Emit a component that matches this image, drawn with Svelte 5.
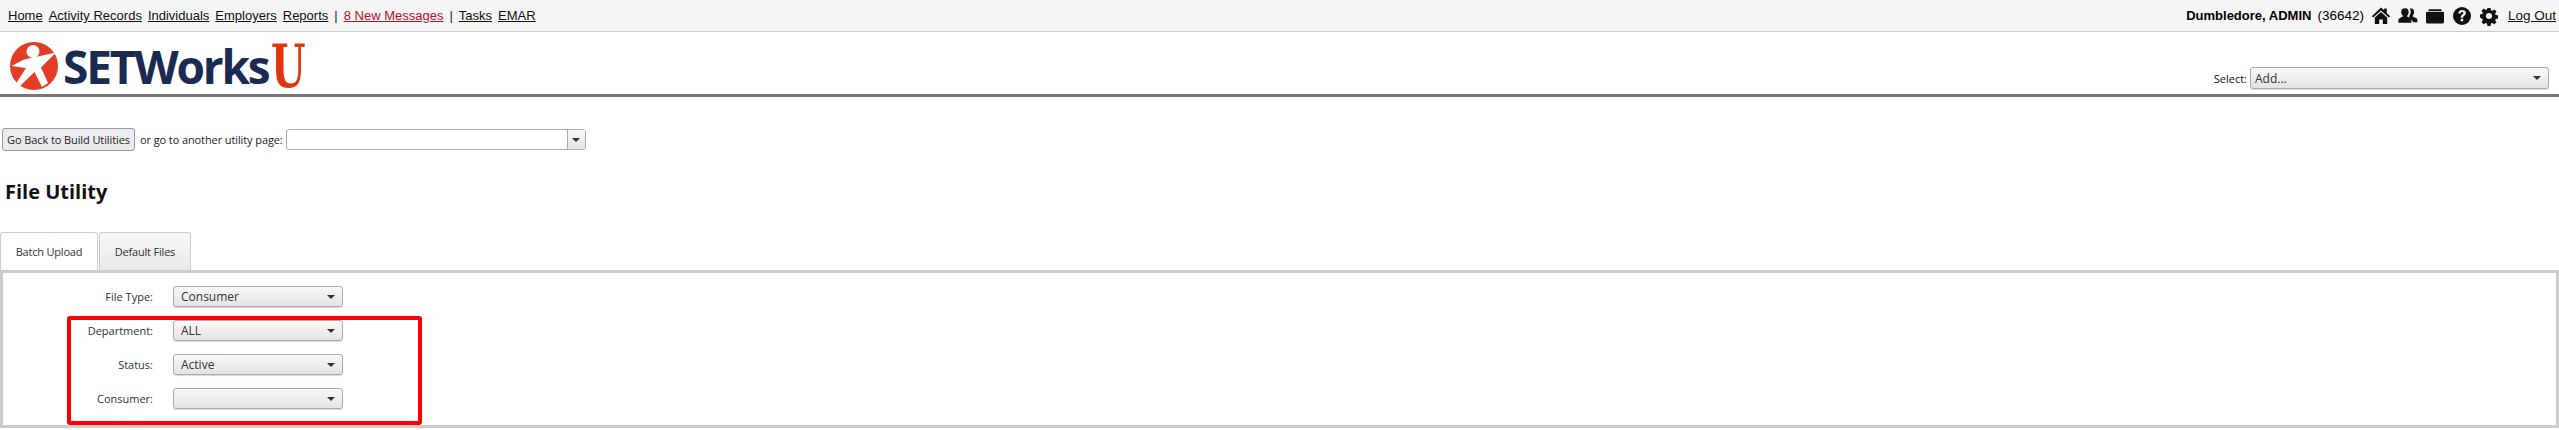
<script>
	const navLeft = ['Home', 'Activity Records', 'Individuals', 'Employers', 'Reports'];
	const navRight = ['Tasks', 'EMAR'];
	const rows = [
		{ label: 'File Type:', value: 'Consumer' },
		{ label: 'Department:', value: 'ALL' },
		{ label: 'Status:', value: 'Active' },
		{ label: 'Consumer:', value: '' }
	];
</script>

<div class="topbar">
	<nav>
		{#each navLeft as item}
			<a href="#top">{item}</a>
		{/each}
		<span class="sep">|</span>
		<a href="#top" class="msg">8 New Messages</a>
		<span class="sep">|</span>
		{#each navRight as item}
			<a href="#top">{item}</a>
		{/each}
	</nav>
	<div class="user">
		<b>Dumbledore, ADMIN</b>
		<span class="id">(36642)</span>
		<!-- home -->
		<svg class="ico" width="20" height="20" viewBox="0 0 20 20">
			<path d="M10 1.500 0.800 10.200l1.400 1.400L10 4.400l7.800 7.200 1.400-1.400-3.400-3.200V2.600h-2.600v1.600z" />
			<path d="M10 6 3.800 11.600V18h4.400v-4.600h3.600V18h4.400v-6.400z" />
		</svg>
		<!-- users -->
		<svg class="ico" width="20" height="20" viewBox="0 0 20 20">
			<path d="M7.400 2.200c2.200 0 3.300 1.700 3.300 3.700 0 1.500-.6 2.800-1.500 3.600v1.300c1.800.6 3.900 1.500 4.300 3v3H.4v-3c.4-1.500 2.500-2.400 4.300-3V9.500C3.800 8.700 3.200 7.400 3.200 5.900c0-2 1.100-3.700 4.200-3.700z" />
			<path d="M12.800 2.600c2.400 0 3.300 1.500 3.300 3.400 0 1.400-.5 2.600-1.400 3.400v1.300c1.800.5 4.300 1.300 4.700 2.800v2.700h-4.300c-.2-1.800-2.200-3.200-3.800-3.900V9.700c.9-1 1.400-2.400 1.400-3.900 0-1.200-.3-2.300-.9-3.100.2 0 .4-.1 1-.1z" />
		</svg>
		<!-- folder -->
		<svg class="ico" width="20" height="20" viewBox="0 0 20 20">
			<path d="M4 3.200h12l1 2H3z" />
			<path d="M1 6h18v10c0 .9-.6 1.400-1.400 1.400H2.400C1.600 17.400 1 16.900 1 16z" />
		</svg>
		<!-- help -->
		<svg class="ico" width="20" height="20" viewBox="0 0 20 20">
			<circle cx="10" cy="10" r="9" />
			<path fill="#f5f5f5" d="M6.300 7.400C6.500 5.200 8 4 10.200 4c2.200 0 3.700 1.200 3.700 3 0 1.400-.8 2.100-1.700 2.800-.8.6-1.100 1-1.100 1.900H8.700c0-1.600.4-2.300 1.400-3 .7-.5 1.200-.9 1.200-1.600 0-.7-.5-1.100-1.200-1.100-.8 0-1.300.5-1.400 1.400z" />
			<rect fill="#f5f5f5" x="8.700" y="12.800" width="2.500" height="2.500" />
		</svg>
		<!-- gear -->
		<svg class="ico" width="20" height="20" viewBox="0 0 20 20">
			<path fill-rule="evenodd" d="M8.300 1h3.400l.5 2.600 1.500.6 2.200-1.500 2.400 2.400-1.500 2.200.6 1.500 2.600.5v3.400l-2.600.5-.6 1.500 1.500 2.200-2.400 2.400-2.200-1.500-1.500.6-.5 2.600H8.300l-.5-2.600-1.500-.6-2.200 1.500-2.400-2.400 1.500-2.200-.6-1.500L0 11.700V8.300l2.600-.5.600-1.500-1.500-2.200 2.400-2.400 2.200 1.500 1.500-.6zM10 6.600a3.400 3.400 0 1 0 0 6.800 3.400 3.400 0 0 0 0-6.800z" transform="translate(1 1) scale(.9)" />
		</svg>
		<a href="#top" class="logout">Log Out</a>
	</div>
</div>

<header>
	<div class="logo">
		<svg class="mark" width="48" height="48" viewBox="0 0 48 48">
			<circle cx="24" cy="24" r="24" fill="#e03c26" />
			<ellipse cx="23" cy="9.500" rx="6.500" ry="6.500" fill="#fff" />
			<path fill="#fff" d="M1.500 24 14 17.500 46 10.500 31 25.500 38 41 32 45 24.500 30 10 44 6 41.500 16 26z" />
		</svg>
		<span class="word">SETWorks</span>
		<span class="u">U</span>
	</div>
	<div class="add">
		<label for="add">Select:</label>
		<div class="select wide" id="add"><span>Add...</span><i></i></div>
	</div>
</header>

<main>
	<div class="tools">
		<button>Go Back to Build Utilities</button>
		<span>or go to another utility page:</span>
		<div class="combo"><div class="drop"><i></i></div></div>
	</div>

	<h1>File Utility</h1>

	<div class="tabs">
		<div class="tab active">Batch Upload</div>
		<div class="tab">Default Files</div>
	</div>

	<div class="panel">
		{#each rows as row}
			<div class="row">
				<span class="lbl">{row.label}</span>
				<div class="select"><span>{row.value}</span><i></i></div>
			</div>
		{/each}
		<div class="highlight"></div>
	</div>
</main>

<style>
	:global(body) {
		margin: 0;
		height: 430px;
		overflow: hidden;
		background: #fff;
		font-family: "Open Sans", "Noto Sans", sans-serif;
		font-size: 11px;
		color: #222;
	}

	.topbar {
		height: 32px;
		box-sizing: border-box;
		padding: 0 3px 0 8px;
		display: flex;
		justify-content: space-between;
		align-items: center;
		background: #f5f5f5;
		border-bottom: 1px solid #ccc;
		font-family: "Liberation Sans", Arial, sans-serif;
		font-size: 13px;
		color: #000;
	}

	nav {
		display: flex;
		gap: 6px;
		align-items: center;
	}

	a {
		color: #111;
		text-decoration: underline;
	}

	.msg {
		color: #b1122c;
	}

	.sep {
		color: #222;
	}

	.user {
		display: flex;
		align-items: center;
		gap: 6px;
	}

	.user b {
		font-size: 13px;
	}

	.id {
		font-size: 13.500px;
	}

	.ico {
		fill: #111;
		display: block;
		margin-left: 1px;
	}

	.logout {
		margin-left: 3px;
		font-size: 13.500px;
	}

	header {
		height: 65px;
		box-sizing: border-box;
		display: flex;
		justify-content: space-between;
		align-items: flex-end;
		border-bottom: 3px solid #777;
		padding: 0 10px 5px 10px;
	}

	.logo {
		display: flex;
		align-items: center;
		height: 48px;
		margin-bottom: -1px;
	}

	.mark {
		display: block;
	}

	.word {
		margin-left: 5px;
		font-size: 46px;
		font-weight: 700;
		letter-spacing: -2.200px;
		color: #1a2a50;
		line-height: 48px;
	}

	.u {
		font-family: "DejaVu Serif", serif;
		font-weight: 700;
		font-size: 60px;
		line-height: 48px;
		color: #e0350f;
		display: inline-block;
		width: 35px;
		margin-left: 3px;
		transform: scaleX(.66);
		transform-origin: left center;
	}

	.add {
		display: flex;
		align-items: center;
		gap: 3px;
		color: #111;
	}

	.select {
		width: 170px;
		height: 21px;
		box-sizing: border-box;
		border: 1px solid #aaa;
		border-radius: 3px;
		background: linear-gradient(#f8f8f8, #e4e4e4);
		box-shadow: 0 1px 1px rgba(0, 0, 0, .15);
		display: flex;
		align-items: center;
		justify-content: space-between;
		padding: 0 7px;
		font-size: 12px;
		color: #333;
	}

	.select.wide {
		width: 299px;
		height: 22px;
		padding: 0 7px 0 4px;
	}

	i {
		width: 0;
		height: 0;
		border: 4px solid transparent;
		border-top: 4px solid #333;
		border-bottom: 0;
	}

	main {
		padding-top: 31px;
	}

	.tools {
		display: flex;
		align-items: center;
		padding-left: 2px;
		height: 23px;
		color: #222;
	}

	.tools span {
		margin: 0 3px 0 5px;
		letter-spacing: -.1px;
	}

	button {
		width: 133px;
		height: 23px;
		padding: 0;
		font: inherit;
		letter-spacing: -.1px;
		color: #222;
		border: 1px solid #999;
		border-radius: 3px;
		background: #ececf0;
		white-space: nowrap;
	}

	.combo {
		width: 300px;
		height: 21px;
		box-sizing: border-box;
		border: 1px solid #aaa;
		border-radius: 3px;
		display: flex;
		justify-content: flex-end;
		background: #fff;
	}

	.drop {
		width: 17px;
		border-left: 1px solid #aaa;
		background: linear-gradient(#f8f8f8, #e4e4e4);
		display: flex;
		align-items: center;
		justify-content: center;
	}

	h1 {
		margin: 26px 0 0 5px;
		height: 55px;
		font-size: 20px;
		line-height: 30px;
		font-weight: 700;
		color: #111;
	}

	.tabs {
		display: flex;
		gap: 1px;
		height: 38px;
		box-sizing: border-box;
	}

	.tab {
		box-sizing: border-box;
		width: 92px;
		height: 38px;
		border: 1px solid #ccc;
		border-bottom: 0;
		border-radius: 3px 3px 0 0;
		background: linear-gradient(#f8f8f8, #e8e8e8);
		display: flex;
		align-items: center;
		justify-content: center;
		color: #333;
		letter-spacing: -.2px;
	}

	.tab.active {
		width: 98px;
		background: #fff;
	}

	.panel {
		position: relative;
		box-sizing: border-box;
		height: 158px;
		border: 3px solid #ccc;
		padding-top: 13px;
		display: flex;
		flex-direction: column;
		gap: 13px;
	}

	.row {
		display: flex;
		align-items: center;
		gap: 20px;
	}

	.lbl {
		width: 150px;
		text-align: right;
		color: #333;
	}

	.highlight {
		position: absolute;
		left: 64px;
		top: 43px;
		width: 355px;
		height: 109px;
		box-sizing: border-box;
		border: 4px solid #f00;
		border-radius: 3px;
		pointer-events: none;
	}
</style>
